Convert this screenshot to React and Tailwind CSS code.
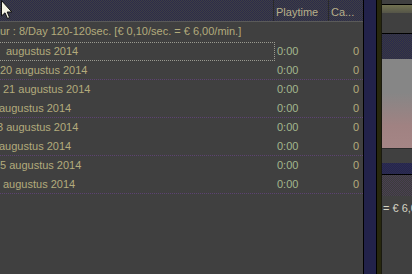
const rows = [
  { text: "augustus 2014", shift: "ml-[6px]", focus: true },
  { text: "20 augustus 2014", shift: "ml-[0px]", line: true },
  { text: "21 augustus 2014", shift: "ml-[3px]" },
  { text: "augustus 2014", shift: "-ml-[1px]", line: true },
  { text: "3 augustus 2014", shift: "-ml-[3px]" },
  { text: "augustus 2014", shift: "-ml-[1px]", line: true },
  { text: "5 augustus 2014", shift: "ml-[0px]" },
  { text: "augustus 2014", shift: "ml-[3px]", line: true },
];

function Cursor() {
  return (
    <svg className="absolute left-0 top-0" width="13" height="20" viewBox="0 0 13 20">
      <path
        d="M1.5 0.5 L1.5 16 L5 12.8 L7.5 18.5 L9.6 17.6 L7.2 12 L11.8 12 Z"
        fill="#f4f2e4"
        stroke="#101010"
        strokeWidth="1"
        strokeLinejoin="miter"
      />
    </svg>
  );
}

function Row({ row }) {
  return (
    <div
      className={
        "flex h-[19px] shrink-0 " +
        (row.line ? "border-b border-dotted border-[#5c4272]" : "")
      }
    >
      <div
        className={
          "w-[275px] shrink-0 overflow-hidden whitespace-nowrap flex items-center " +
          (row.focus ? "border-y border-r border-dotted border-[#9a9a90]" : "")
        }
      >
        <span className={row.shift + " text-[#b3ab7c]"}>{row.text}</span>
      </div>
      <div className="w-[55px] shrink-0 flex items-center pl-[2px] text-[#a3b78e]">0:00</div>
      <div className="flex-1 flex items-center justify-end pr-[4px] text-[#b3ab7c]">0</div>
    </div>
  );
}

export default function App() {
  return (
    <div
      className="relative w-[412px] h-[274px] flex overflow-hidden bg-[#404040] text-[11px] leading-none"
      style={{ fontFamily: '"Liberation Sans", Arial, sans-serif' }}
    >
      {/* list */}
      <div className="w-[363px] shrink-0 flex flex-col">
        <div className="h-[22px] shrink-0 flex border-b border-[#5a5a5a] bg-[image:repeating-conic-gradient(#3e3e44_0%_25%,#2c2c4a_0%_50%)] bg-[length:2px_2px] text-[#b8b08a]">
          <div className="w-[274px] shrink-0 border-r border-[#2a2a2a]" />
          <div className="w-[55px] shrink-0 border-r border-[#2a2a2a] flex items-center pl-[2px] pt-[3px]">Playtime</div>
          <div className="flex-1 flex items-center pl-[2px] pt-[3px]">Ca...</div>
        </div>
        <div className="h-[20px] shrink-0 flex items-center pb-[1px] whitespace-nowrap overflow-hidden text-[#b3ab7c]">
          ur : 8/Day 120-120sec. [€ 0,10/sec. = € 6,00/min.]
        </div>
        {rows.map((r, i) => (
          <Row key={i} row={r} />
        ))}
      </div>

      {/* splitter */}
      <div className="w-px shrink-0 bg-black" />
      <div className="w-[12px] shrink-0 bg-[#22224a]" />
      <div className="w-px shrink-0 bg-black" />
      <div className="w-[4px] shrink-0 bg-[#28280e]" />
      <div className="w-px shrink-0 bg-[#1a1a10]" />

      {/* right pane */}
      <div className="flex-1 flex flex-col overflow-hidden">
        <div className="h-[4px] shrink-0" />
        <div className="h-px shrink-0 bg-black" />
        <div className="h-[8px] shrink-0 bg-gradient-to-b from-[#727250] to-[#555548]" />
        <div className="h-[20px] shrink-0" />
        <div className="h-px shrink-0 bg-black" />
        <div className="h-[25px] shrink-0 bg-[image:repeating-conic-gradient(#2a2a4e_0%_25%,#3a3a40_0%_50%)] bg-[length:2px_2px]" />
        <div className="h-[89px] shrink-0 bg-[linear-gradient(to_bottom,#868686_0%,#868686_38%,#a08282_75%,#a58585_100%)]" />
        <div className="h-px shrink-0 bg-[#2a2a2a]" />
        <div className="h-[14px] shrink-0" />
        <div className="h-[11px] shrink-0 bg-[image:repeating-conic-gradient(#2c2c54_0%_25%,#26264a_0%_50%)] bg-[length:2px_2px]" />
        <div className="h-px shrink-0 bg-black" />
        <div className="h-[21px] shrink-0 bg-[image:repeating-conic-gradient(#4a4052_0%_25%,#3c3c3c_0%_50%)] bg-[length:2px_2px]" />
        <div className="h-[22px] shrink-0 flex items-center pt-[3px] pl-[1px] whitespace-nowrap text-[#d4d4c4]">
          = € 6,00/min.]
        </div>
      </div>

      <Cursor />
    </div>
  );
}
